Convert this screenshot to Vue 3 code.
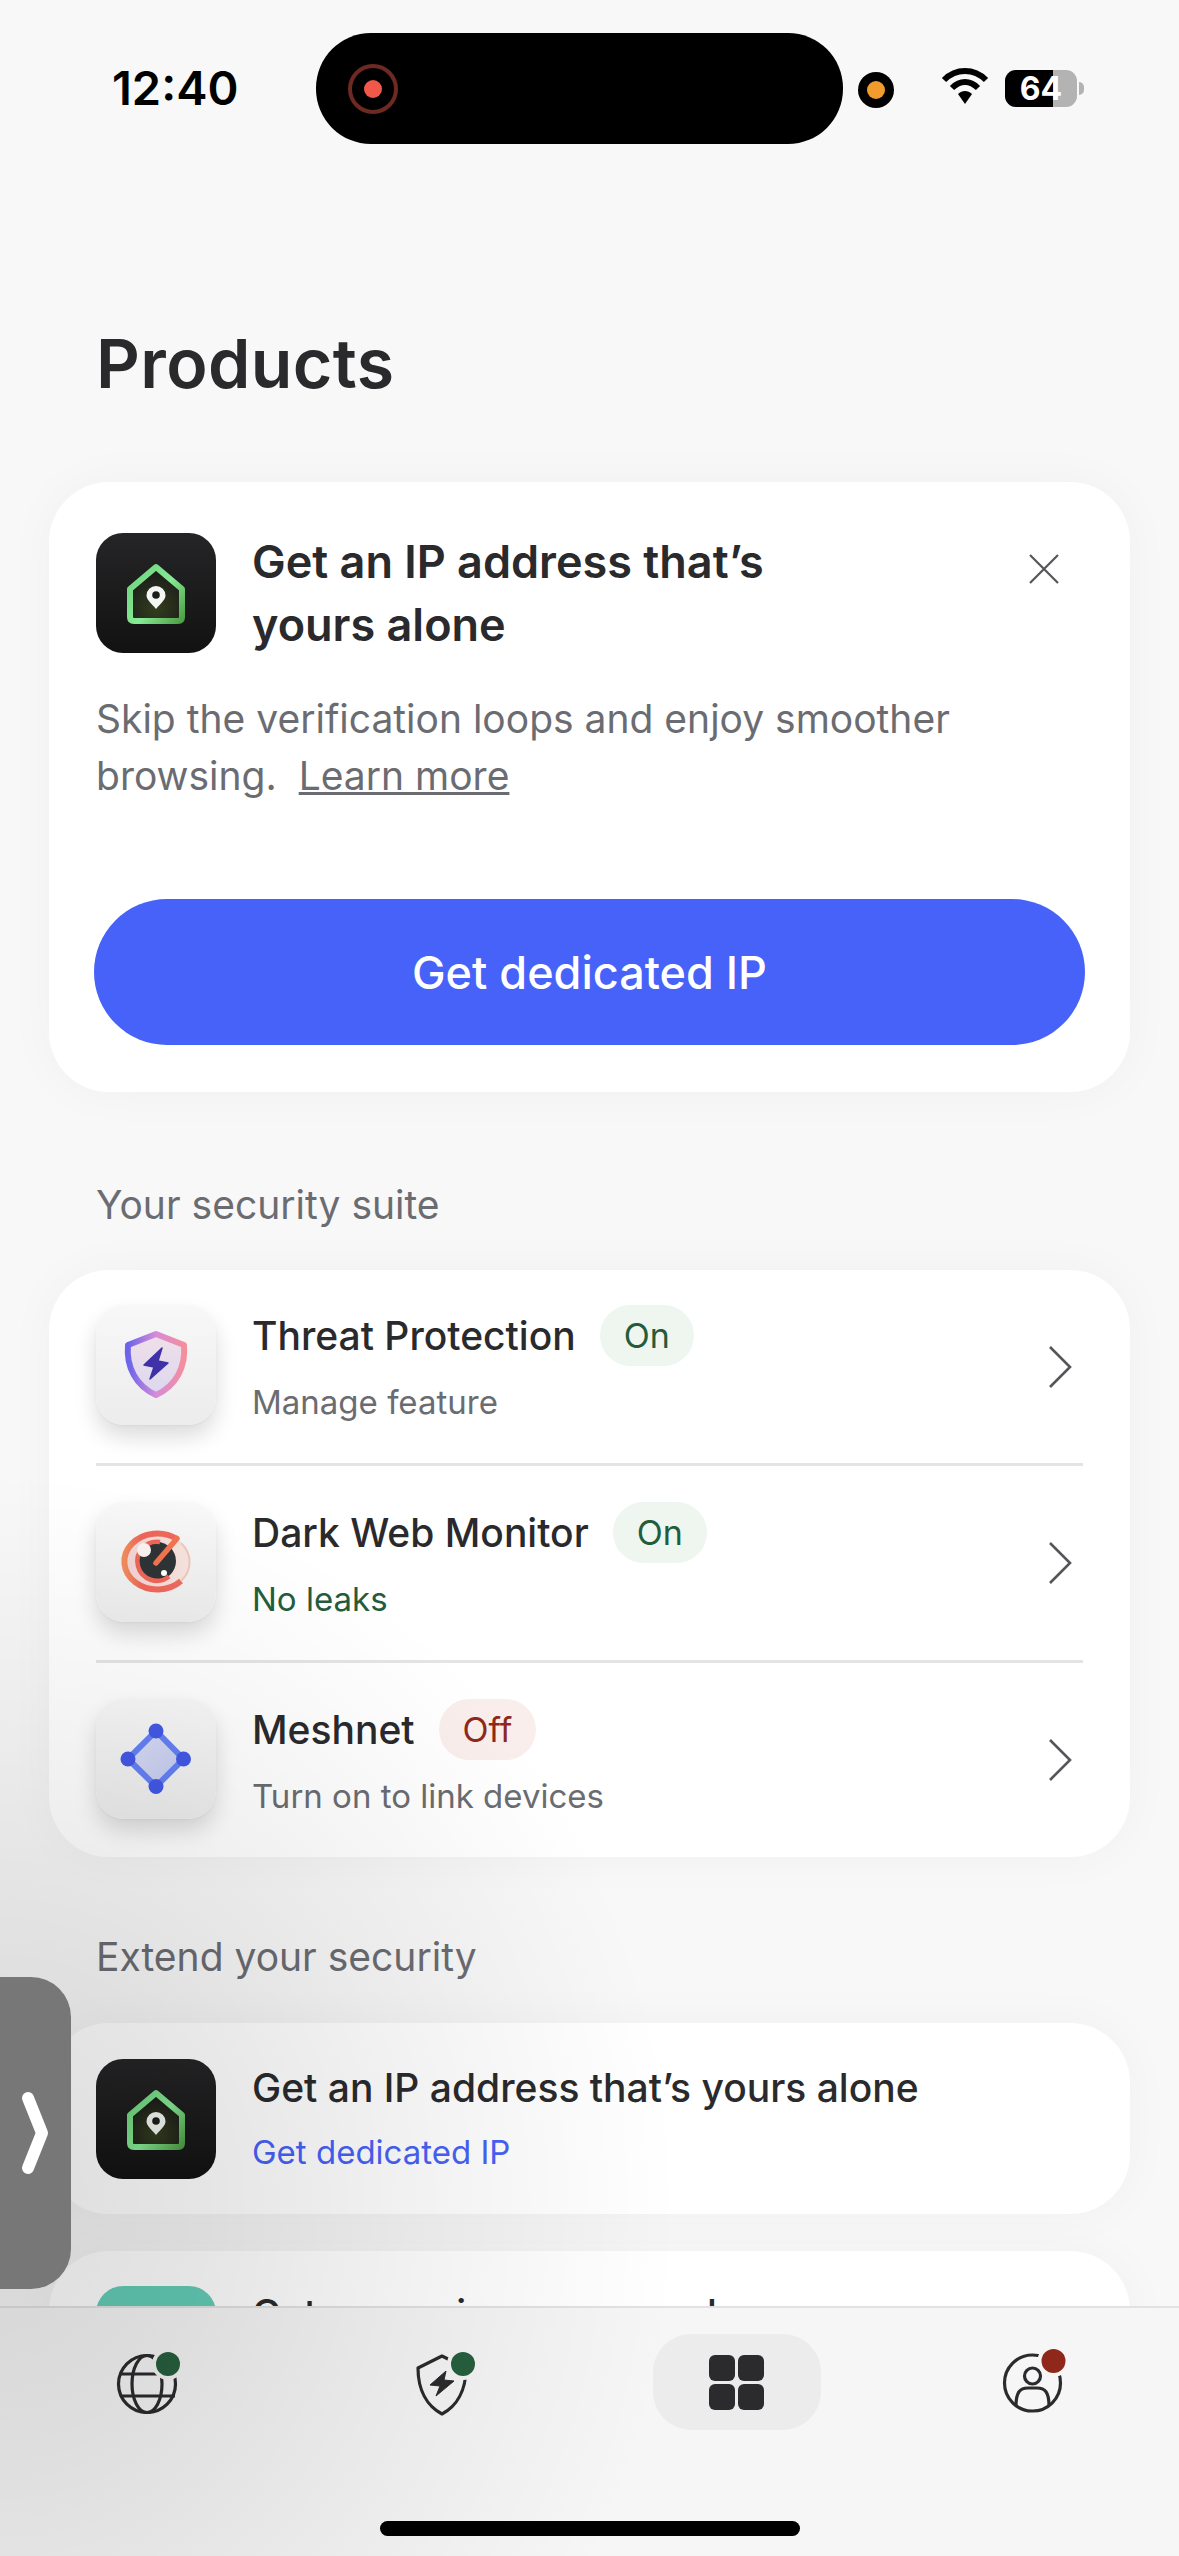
<script setup>
const suite = [
  { id: 'threat', name: 'Threat Protection', pill: 'On', sub: 'Manage feature', good: false },
  { id: 'dark', name: 'Dark Web Monitor', pill: 'On', sub: 'No leaks', good: true },
  { id: 'mesh', name: 'Meshnet', pill: 'Off', sub: 'Turn on to link devices', good: false },
]
</script>

<template>
  <div class="screen">
    <header class="status">
      <span class="time">12:40</span>
      <div class="island">
        <svg class="rec" width="52" height="52" viewBox="0 0 52 52"><circle cx="26" cy="26" r="23" fill="none" stroke="#6e2a22" stroke-width="4"/><circle cx="26" cy="26" r="9" fill="#f0584a"/></svg>
      </div>
      <span class="cam"><i></i></span>
      <svg class="wifi" width="48" height="38" viewBox="0 0 48 38">
        <path d="M3 13 C15 1 33 1 45 13" fill="none" stroke="#000" stroke-width="6"/>
        <path d="M11 21 C19 13 29 13 37 21" fill="none" stroke="#000" stroke-width="6"/>
        <path d="M17 27 C21 23 27 23 31 27 L24 37 Z" fill="#000"/>
      </svg>
      <div class="battery"><span class="batt-level"></span><span class="batt-text">64</span><span class="nub"></span></div>
    </header>

    <main class="content">
      <h1 class="page-title">Products</h1>

      <section class="card promo">
        <div class="promo-head">
          <svg class="app-icon" width="120" height="120" viewBox="0 0 120 120">
            <defs>
              <linearGradient id="dk" x1="0" y1="0" x2="0" y2="1"><stop offset="0" stop-color="#252527"/><stop offset="1" stop-color="#121212"/></linearGradient>
              <linearGradient id="gr" x1="0" y1="0.2" x2="1" y2="1"><stop offset="0" stop-color="#72d57f"/><stop offset=".5" stop-color="#86ea95"/><stop offset="1" stop-color="#4f9f45"/></linearGradient>
              <radialGradient id="ol" cx=".5" cy=".75" r=".6"><stop offset="0" stop-color="#333d1e"/><stop offset="1" stop-color="#1d1f1a"/></radialGradient>
            </defs>
            <rect width="120" height="120" rx="27" fill="url(#dk)"/>
            <path d="M60 34 L86 56 V84 Q86 88 82 88 H38 Q34 88 34 84 V56 Z" fill="url(#ol)" stroke="url(#gr)" stroke-width="6" stroke-linejoin="round"/>
            <path d="M60 76 C55 70 50.500 66.500 50.500 62.500 A9.500 9.500 0 0 1 69.500 62.500 C69.500 66.500 65 70 60 76 Z" fill="#f3f7f3"/>
            <circle cx="60" cy="62" r="3.800" fill="#1c1d1a"/>
          </svg>
          <h2 class="promo-title">Get an IP address that’s<br>yours alone</h2>
          <svg class="close" width="30" height="30" viewBox="0 0 30 30"><path d="M1 1 L29 29 M29 1 L1 29" stroke="#55565a" stroke-width="2.200" fill="none"/></svg>
        </div>
        <p class="promo-text">Skip the verification loops and enjoy smoother browsing. &nbsp;<u>Learn more</u></p>
        <button class="cta">Get dedicated IP</button>
      </section>

      <h3 class="section">Your security suite</h3>
      <section class="card list">
        <div v-for="item in suite" :key="item.id" class="row">
          <span class="tile">
            <svg v-if="item.id === 'threat'" width="120" height="120" viewBox="0 0 120 120">
              <defs>
                <linearGradient id="sh" x1="0" y1="0" x2="1" y2="0"><stop offset="0" stop-color="#6a63ec"/><stop offset=".5" stop-color="#d68cd8"/><stop offset="1" stop-color="#f48f9c"/></linearGradient>
                <linearGradient id="shf" x1="0" y1="0" x2="0" y2="1"><stop offset="0" stop-color="#f0dfe8"/><stop offset="1" stop-color="#dcd8f0"/></linearGradient>
              </defs>
              <path d="M60 29 L88 40 C90 62 80 81 60 90 C40 81 30 62 32 40 Z" fill="url(#shf)" stroke="url(#sh)" stroke-width="6" stroke-linejoin="round"/>
              <path d="M66 43 L48 60 L58 62 L54 74 L72 58 L62 56 Z" fill="#3f32a8" stroke="#3f32a8" stroke-width="1.500" stroke-linejoin="round"/>
            </svg>
            <svg v-else-if="item.id === 'dark'" width="120" height="120" viewBox="0 0 120 120">
              <defs>
                <linearGradient id="ey" x1="0" y1="0" x2="1" y2="0"><stop offset="0" stop-color="#f08c5c"/><stop offset=".3" stop-color="#ee6558"/><stop offset="1" stop-color="#ef6a5e"/></linearGradient>
                <linearGradient id="ez" x1="0" y1="0" x2="1" y2="0"><stop offset="0" stop-color="#f0d2d0"/><stop offset="1" stop-color="#f7e4de"/></linearGradient>
              </defs>
              <ellipse cx="60" cy="60" rx="34" ry="29" fill="url(#ez)"/>
              <path d="M81 37 A33 28 0 1 0 85 79" fill="none" stroke="url(#ey)" stroke-width="6"/>
              <path d="M85 41 A35 29 0 0 1 85 79" fill="none" stroke="#f1c6ba" stroke-width="2"/>
              <circle cx="61" cy="59" r="19" fill="#2e3336"/>
              <path d="M64 40 A19.500 19.500 0 1 0 73 74.500" fill="none" stroke="#ee6558" stroke-width="4.500"/>
              <path d="M60 61 L81 36.500" stroke="#f0744f" stroke-width="5.500" stroke-linecap="round"/>
              <circle cx="48" cy="48" r="7" fill="#faf1f1"/>
              <circle cx="68" cy="71" r="3" fill="#fff"/>
            </svg>
            <svg v-else width="120" height="120" viewBox="0 0 120 120">
              <defs><linearGradient id="ms" x1="0" y1="0" x2="1" y2="1"><stop offset="0" stop-color="#d9def6"/><stop offset="1" stop-color="#c3c9ee"/></linearGradient></defs>
              <path d="M60 32 L87.500 60 L60 87.500 L32 60 Z" fill="url(#ms)" stroke="#6480f5" stroke-width="6"/>
              <g fill="#4358e6"><circle cx="60" cy="32" r="7.500"/><circle cx="32" cy="60" r="7.500"/><circle cx="87.500" cy="60" r="7.500"/><circle cx="60" cy="87.500" r="7.500"/></g>
            </svg>
          </span>
          <div class="row-text">
            <div class="row-top">
              <span class="row-name">{{ item.name }}</span>
              <span class="pill" :class="item.pill === 'On' ? 'on' : 'off'">{{ item.pill }}</span>
            </div>
            <div class="row-sub" :class="{ good: item.good }">{{ item.sub }}</div>
          </div>
          <svg class="chev" width="24" height="44" viewBox="0 0 24 44"><path d="M2 2 L22 22 L2 42" fill="none" stroke="#55565a" stroke-width="2.600"/></svg>
        </div>
      </section>

      <h3 class="section second">Extend your security</h3>
      <section class="card extend">
        <svg class="app-icon" width="120" height="120" viewBox="0 0 120 120">
          <rect width="120" height="120" rx="27" fill="url(#dk)"/>
          <path d="M60 34 L86 56 V84 Q86 88 82 88 H38 Q34 88 34 84 V56 Z" fill="url(#ol)" stroke="url(#gr)" stroke-width="6" stroke-linejoin="round"/>
          <path d="M60 76 C55 70 50.500 66.500 50.500 62.500 A9.500 9.500 0 0 1 69.500 62.500 C69.500 66.500 65 70 60 76 Z" fill="#f3f7f3"/>
          <circle cx="60" cy="62" r="3.800" fill="#1c1d1a"/>
        </svg>
        <div class="row-text">
          <div class="row-name">Get an IP address that’s yours alone</div>
          <div class="row-sub link">Get dedicated IP</div>
        </div>
      </section>
      <section class="card extend peek">
        <span class="teal"></span>
        <div class="row-text">
          <div class="row-name">Get a premium password</div>
        </div>
      </section>
    </main>

    <nav class="tabs">
      <div class="tab">
        <svg width="80" height="80" viewBox="0 0 80 80" fill="none" stroke="#2b2b2e" stroke-width="3.200">
          <circle cx="38" cy="40" r="28.500"/>
          <ellipse cx="38" cy="40" rx="15" ry="28.500"/>
          <path d="M11 30 H66 M11 52 H66"/>
          <circle cx="59" cy="20" r="16" fill="#f6f6f6" stroke="none"/>
          <circle cx="59" cy="20" r="12" fill="#27603e" stroke="none"/>
        </svg>
      </div>
      <div class="tab">
        <svg width="80" height="80" viewBox="0 0 80 80" fill="none" stroke="#2b2b2e" stroke-width="3.200" stroke-linejoin="round">
          <path d="M38 12 L14 24 C14 46 23 62 38 70 C53 62 62 46 62 24 Z"/>
          <path d="M42 27 L26 41 L36 42 L32 52 L50 37 L40 36 Z" fill="#2b2b2e" stroke-width="1"/>
          <circle cx="59" cy="20" r="16" fill="#f6f6f6" stroke="none"/>
          <circle cx="59" cy="20" r="12" fill="#27603e" stroke="none"/>
        </svg>
      </div>
      <div class="tab">
        <div class="active">
          <span v-for="n in 4" :key="n"></span>
        </div>
      </div>
      <div class="tab">
        <svg width="80" height="80" viewBox="0 0 80 80" fill="none" stroke="#2b2b2e" stroke-width="3.200">
          <circle cx="38.500" cy="39" r="28"/>
          <circle cx="38.500" cy="32" r="8"/>
          <path d="M22 62 C22 48 26 44 34 44 H43 C51 44 55 48 55 62"/>
          <circle cx="59.500" cy="17" r="16" fill="#f6f6f6" stroke="none"/>
          <circle cx="59.500" cy="17" r="12" fill="#8f281b" stroke="none"/>
        </svg>
      </div>
      <div class="home-bar"></div>
    </nav>

    <div class="shade"></div>
    <div class="handle">
      <svg width="40" height="90" viewBox="0 0 40 90"><path d="M12 10 L26 45 L12 80" fill="none" stroke="#fff" stroke-width="12" stroke-linecap="round" stroke-linejoin="round"/></svg>
    </div>
  </div>
</template>

<style>
html, body { margin: 0; background: #f8f8f8; }
</style>

<style scoped>
.screen {
  position: relative;
  width: 1179px;
  height: 2556px;
  overflow: hidden;
  display: flex;
  flex-direction: column;
  background: #f8f8f8;
  font-family: Inter, "Liberation Sans", sans-serif;
  color: #2a2a2d;
}
.status {
  flex: none;
  height: 144px;
  padding-top: 33px;
  box-sizing: border-box;
  display: flex;
  align-items: flex-start;
  color: #000;
}
.time {
  margin: 30px 0 0 112px;
  width: 204px;
  font-size: 47px;
  line-height: 50px;
  font-weight: 600;
}
.island {
  width: 527px;
  height: 111px;
  border-radius: 55px;
  background: #000;
  display: flex;
  align-items: center;
  padding-left: 31px;
  box-sizing: border-box;
}
.cam {
  margin: 39px 0 0 15px;
  width: 36px;
  height: 36px;
  border-radius: 50%;
  background: #000;
  display: flex;
  align-items: center;
  justify-content: center;
}
.cam i { width: 18px; height: 18px; border-radius: 50%; background: #f39c2e; }
.wifi { margin: 34px 0 0 47px; }
.battery {
  position: relative;
  margin: 37px 0 0 16px;
  width: 72px;
  height: 37px;
  border-radius: 11px;
  background: #b3b3b3;
  overflow: visible;
}
.batt-level {
  position: absolute;
  inset: 0 24px 0 0;
  background: #000;
  border-radius: 11px 0 0 11px;
}
.batt-text {
  position: relative;
  display: block;
  width: 72px;
  text-align: center;
  font-size: 32px;
  line-height: 37px;
  font-weight: 700;
  color: #fff;
}
.nub {
  position: absolute;
  right: -7px;
  top: 12px;
  width: 5px;
  height: 13px;
  border-radius: 0 5px 5px 0;
  background: #b3b3b3;
}
.content {
  flex: 1;
  min-height: 0;
  overflow: hidden;
  padding: 0 49px;
}
.page-title {
  margin: 179px 0 0 47px;
  font-size: 68px;
  line-height: 80px;
  font-weight: 600;
  letter-spacing: 0.4px;
}
.card {
  background: #fff;
  border-radius: 60px;
  box-shadow: 0 0 50px rgba(0, 0, 0, 0.035);
}
.promo {
  margin-top: 79px;
  height: 610px;
  box-sizing: border-box;
  padding: 51px 45px 47px 47px;
  display: flex;
  flex-direction: column;
}
.promo-head {
  display: flex;
  align-items: flex-start;
  position: relative;
}
.app-icon { flex: none; }
.promo-title {
  margin: -3px 0 0 36px;
  font-size: 45px;
  line-height: 63px;
  font-weight: 600;
}
.close { position: absolute; right: 26px; top: 21px; }
.promo-text {
  margin: 34px 0 0;
  font-size: 39px;
  line-height: 57px;
  color: #6b6c72;
  max-width: 990px;
}
.cta {
  margin: auto 0 0 -2px;
  width: 991px;
  height: 146px;
  border: 0;
  border-radius: 73px;
  background: #4662f8;
  color: #fff;
  font-family: inherit;
  font-size: 45px;
  font-weight: 500;
}
.section {
  margin: 88px 0 0 47px;
  font-size: 39px;
  line-height: 50px;
  font-weight: 400;
  color: #6b6c72;
}
.section.second { margin-top: 75px; }
.list {
  margin-top: 40px;
  height: 587px;
  padding: 0 47px;
  box-sizing: border-box;
}
.row {
  height: 197px;
  display: flex;
  align-items: center;
  box-sizing: border-box;
}
.row + .row { border-top: 3px solid #e4e4e4; }
.row:first-child { height: 193px; }
.tile {
  flex: none;
  width: 120px;
  height: 120px;
  margin-top: -3px;
  border-radius: 28px;
  background: linear-gradient(#f8f8f8, #ececec);
  box-shadow: 0 12px 22px rgba(0, 0, 0, 0.14), 0 1px 3px rgba(0, 0, 0, 0.04);
}
.tile svg { display: block; }
.row-text { margin: -2px 0 0 36px; flex: 1; min-width: 0; }
.row-top { display: flex; align-items: center; height: 61px; }
.row-name { font-size: 39px; line-height: 61px; font-weight: 500; }
.pill {
  margin-left: 24px;
  height: 61px;
  padding: 0 24px;
  border-radius: 31px;
  font-size: 34px;
  line-height: 61px;
}
.pill.on { background: #eef6ef; color: #235c3c; }
.pill.off { background: #f9eeeb; color: #8f281b; }
.row-sub { margin-top: 12px; font-size: 33px; line-height: 48px; color: #6b6c72; }
.row-sub.good { color: #235c3c; }
.row-sub.link { color: #4662f8; margin-top: 10px; }
.chev { flex: none; margin: 0 11px 0 0; }
.extend {
  margin-top: 41px;
  height: 191px;
  display: flex;
  align-items: center;
  padding: 0 47px;
  box-sizing: border-box;
  flex: none;
}
.extend > .row-text { margin-top: -5px; }
.peek {
  margin-top: 37px;
  align-items: flex-start;
  padding-top: 35px;
}
.teal {
  flex: none;
  width: 120px;
  height: 120px;
  border-radius: 27px;
  background: #63cdb7;
}
.peek > .row-text { margin-top: -3px; }
.tabs {
  position: relative;
  flex: none;
  height: 250px;
  box-sizing: border-box;
  border-top: 2px solid #e2e2e2;
  background: #f6f6f6;
  display: grid;
  grid-template-columns: repeat(4, 1fr);
  align-items: start;
  padding-top: 26px;
}
.tab { display: flex; justify-content: center; }
.tab svg { margin-top: 10px; margin-left: 4px; }
.active {
  width: 168px;
  height: 96px;
  border-radius: 38px;
  background: #ececec;
  box-sizing: border-box;
  padding: 21px 30px;
  display: grid;
  grid-template-columns: 26px 26px;
  grid-auto-rows: 26px;
  gap: 3px;
  justify-content: center;
}
.active span { background: #2b2b2e; border-radius: 6px; }
.home-bar {
  position: absolute;
  left: 380px;
  bottom: 20px;
  width: 420px;
  height: 15px;
  border-radius: 8px;
  background: #000;
}
.shade {
  position: absolute;
  inset: 0;
  pointer-events: none;
  background: radial-gradient(ellipse 680px 740px at 0 2210px, rgba(0, 0, 0, 0.135), rgba(0, 0, 0, 0.1) 30%, rgba(0, 0, 0, 0.055) 60%, rgba(0, 0, 0, 0.018) 85%, rgba(0, 0, 0, 0) 100%);
}
.handle {
  position: absolute;
  left: 0;
  top: 1977px;
  width: 71px;
  height: 312px;
  border-radius: 0 40px 40px 0;
  background: #777;
  display: flex;
  align-items: center;
  padding-left: 16px;
  box-sizing: border-box;
}
</style>
